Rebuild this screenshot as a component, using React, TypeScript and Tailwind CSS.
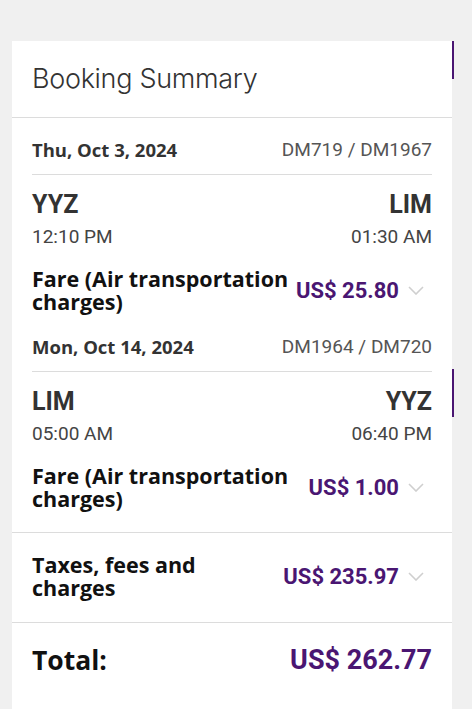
const Chevron = () => (
  <svg width="16" height="9" viewBox="0 0 16 9" className="shrink-0">
    <polyline points="1,1 8,8 15,1" fill="none" stroke="#cfcfcf" strokeWidth="1.6" />
  </svg>
);

const ChargeRow = ({ label, amount, labelWidth }: { label: string; amount: string; labelWidth: string }) => (
  <div className="flex items-center justify-between">
    <div className={`${labelWidth} text-[21.5px] font-bold leading-[23px] text-[#111] [font-family:'Open_Sans',sans-serif]`}>
      {label}
    </div>
    <div className="flex shrink-0 items-center whitespace-nowrap">
      <span className="text-[22px] font-bold text-[#4a1672] [font-family:Roboto,sans-serif]">{amount}</span>
      <span className="ml-[9px] mr-[8px]">
        <Chevron />
      </span>
    </div>
  </div>
);

const Segment = ({
  date,
  flights,
  from,
  to,
  dep,
  arr,
  amount,
  top,
}: {
  date: string;
  flights: string;
  from: string;
  to: string;
  dep: string;
  arr: string;
  amount: string;
  top: string;
}) => (
  <div className="px-5">
    <div className={`flex items-center justify-between ${top} pb-[13px] border-b border-[#dcdcdc] leading-[22px]`}>
      <span className="text-[18.5px] font-bold text-[#333] [font-family:'Open_Sans',sans-serif]">{date}</span>
      <span className="text-[19px] text-[#555] [font-family:Roboto,sans-serif]">{flights}</span>
    </div>
    <div className="pt-[16px] [font-family:Roboto,sans-serif]">
      <div className="flex justify-between text-[25px] font-bold leading-[28px] text-[#333]">
        <span>{from}</span>
        <span>{to}</span>
      </div>
      <div className="mt-[6px] flex justify-between text-[19px] leading-[24px] text-[#444]">
        <span>{dep}</span>
        <span>{arr}</span>
      </div>
    </div>
    <div className="mt-[18px]">
      <ChargeRow label="Fare (Air transportation charges)" amount={amount} labelWidth="w-[264px]" />
    </div>
  </div>
);

export default function App() {
  return (
    <div className="min-h-screen bg-[#f0f0f0] pl-3 pt-[41px]">
      <div className="relative min-h-[668px] w-[440px] bg-white">
        <div className="absolute -right-[2px] top-0 h-[38px] w-[2px] bg-[#4a1672]" />
        <div className="absolute -right-[2px] top-[328px] h-[48px] w-[2px] bg-[#4a1672]" />

        <div className="flex h-[77px] items-center border-b border-[#dcdcdc] px-5">
          <h1 className="text-[27px] font-light tracking-[-0.3px] text-[#333] [font-family:Inter,sans-serif]">
            Booking Summary
          </h1>
        </div>

        <Segment
          date="Thu, Oct 3, 2024"
          flights="DM719 / DM1967"
          from="YYZ"
          to="LIM"
          dep="12:10 PM"
          arr="01:30 AM"
          amount="US$ 25.80"
          top="pt-[21px]"
        />
        <Segment
          date="Mon, Oct 14, 2024"
          flights="DM1964 / DM720"
          from="LIM"
          to="YYZ"
          dep="05:00 AM"
          arr="06:40 PM"
          amount="US$ 1.00"
          top="pt-[23px]"
        />

        <div className="mt-[22px] border-t border-[#dcdcdc] px-5 pb-[23px] pt-[20px]">
          <ChargeRow label="Taxes, fees and charges" amount="US$ 235.97" labelWidth="w-[200px]" />
        </div>

        <div className="flex items-center justify-between border-t border-[#dcdcdc] px-5 pt-[21px] leading-[32px]">
          <span className="text-[26.5px] font-bold text-[#111] [font-family:'Open_Sans',sans-serif]">Total:</span>
          <span className="text-[27px] font-bold text-[#4a1672] [font-family:Roboto,sans-serif]">US$ 262.77</span>
        </div>
      </div>
    </div>
  );
}
